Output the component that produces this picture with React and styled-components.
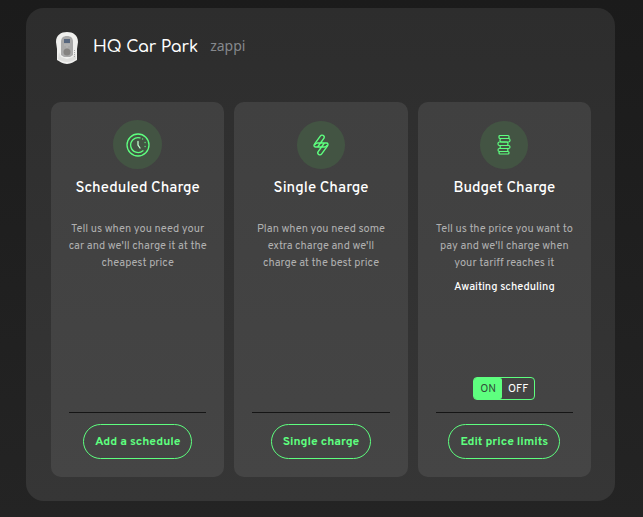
import React, { useState } from 'react';
import styled, { createGlobalStyle } from 'styled-components';

const GlobalStyle = createGlobalStyle`
  * {
    box-sizing: border-box;
  }

  html {
    min-height: 100%;
    background: linear-gradient(#1b1b1b, #242424);
  }

  body {
    margin: 0;
    font-family: Overpass, Roboto, 'Open Sans', sans-serif;
    color: #fff;
  }
`;

const ChargerImage = () => (
  <svg width="22" height="32" viewBox="0 0 22 32" aria-hidden="true">
    <path d="M0 10C0 3 5 0 11 0s11 3 11 10l-1 7 0 11c-2 1-6 4-10 4S3 29 1 28l0-11z" fill="#f0f0ee" />
    <path d="M3 20l-1 7c2 1 5 3 9 3s7-2 9-3l-1-7-2 5-6 2-6-2z" fill="#dededc" />
    <path d="M5 10c0-4 2-6 6-6s6 2 6 6v13l-3 2H8l-3-2z" fill="#a9a9a9" />
    <rect x="8" y="7" width="6" height="4" fill="#58677e" />
    <path d="M8 13h6M10 15h2" stroke="#b8b8b8" />
    <circle cx="11" cy="20" r="3.5" fill="#858381" />
    <path d="M18.5 18v7" stroke="#aaa" strokeDasharray="1 1" />
  </svg>
);

const ClockIcon = () => (
  <svg width="24" height="24" viewBox="0 0 24 24" fill="none" stroke="#5eff7f" strokeWidth="1.3" strokeLinecap="round">
    <circle cx="12" cy="12" r="11" />
    <path d="M14 4.8a7.5 7.5 0 1 0 3 13" />
    <path d="M12 8.5V12l2 3" stroke="#c3ffd0" />
    <path d="M16.5 6h.2M19 9.5h.2M19 13.5h.2" strokeOpacity="0.8" />
  </svg>
);

const BoltIcon = () => (
  <svg width="24" height="24" viewBox="0 0 24 24" fill="none" stroke="#5eff7f" strokeWidth="1.4" strokeLinejoin="round" strokeLinecap="round">
    <path d="M11.3 3.1c1.5-2 4.8-.4 3.7 2L11.5 10h6c1.5 0 2 1.5 1 2.8l-5.800 8.100c-1.5 2-4.8.4-3.7-2l3.500-4.900h-6c-1.500 0-2-1.500-1-2.800z" />
    <path d="M11.500 10L9 13.500M12.500 14l2.500-3.500M6 11.500c.8-1 1.500-1.500 2.500-1.500h3M18 12.500c-.8 1-1.500 1.500-2.500 1.500h-3" />
  </svg>
);

const CoinsIcon = () => (
  <svg width="24" height="24" viewBox="0 0 24 24" fill="none" stroke="#5eff7f" strokeWidth="1.2">
    <rect x="7" y="2.5" width="10" height="3" rx="1" />
    <rect x="8" y="5.5" width="10" height="3.5" rx="1.5" />
    <rect x="6" y="9" width="10" height="3.5" rx="1.5" />
    <rect x="8" y="12.5" width="10" height="3" rx="1.5" />
    <rect x="6" y="15.5" width="10" height="3" rx="1.5" />
    <rect x="7" y="18.5" width="10" height="2.5" rx="1" />
  </svg>
);

const chargeModes = [
  {
    title: 'Scheduled Charge',
    icon: ClockIcon,
    iconSize: 49,
    text: "Tell us when you need your car and we'll charge it at the cheapest price",
    action: 'Add a schedule',
  },
  {
    title: 'Single Charge',
    icon: BoltIcon,
    iconSize: 48,
    text: "Plan when you need some extra charge and we'll charge at the best price",
    action: 'Single charge',
  },
  {
    title: 'Budget Charge',
    icon: CoinsIcon,
    iconSize: 48,
    text: "Tell us the price you want to pay and we'll charge when your tariff reaches it",
    status: 'Awaiting scheduling',
    hasToggle: true,
    action: 'Edit price limits',
  },
];

const App = () => {
  const [enabled, setEnabled] = useState(true);

  return (
    <>
      <GlobalStyle />
      <Page>
        <Panel>
          <Header>
            <ChargerImage />
            <Name>HQ Car Park</Name>
            <Model>zappi</Model>
          </Header>
          <Cards>
            {chargeModes.map(({ title, icon: Icon, iconSize, text, status, hasToggle, action }) => (
              <Card key={title}>
                <IconRow>
                  <IconCircle $size={iconSize}>
                    <Icon />
                  </IconCircle>
                </IconRow>
                <Title>{title}</Title>
                <Description>{text}</Description>
                {status && <Status>{status}</Status>}
                <Footer>
                  {hasToggle && (
                    <Toggle role="group" aria-label={title}>
                      <ToggleOption $active={enabled} aria-pressed={enabled} onClick={() => setEnabled(true)}>
                        ON
                      </ToggleOption>
                      <ToggleOption $active={!enabled} aria-pressed={!enabled} onClick={() => setEnabled(false)}>
                        OFF
                      </ToggleOption>
                    </Toggle>
                  )}
                  <Divider />
                  <ActionButton>{action}</ActionButton>
                </Footer>
              </Card>
            ))}
          </Cards>
        </Panel>
      </Page>
    </>
  );
};

// Styled Components
const Page = styled.div`
  padding: 8px 28px 16px 26px;
`;

const Panel = styled.main`
  padding: 24px;
  padding-left: 25px;
  border-radius: 18px;
  background: linear-gradient(#2d2d2d, #363636);
`;

const Header = styled.header`
  display: flex;
  align-items: center;
  height: 32px;
  margin-bottom: 38px;
  padding-left: 5px;
`;

const Name = styled.h1`
  margin: 0 12px 0 15px;
  padding-bottom: 2px;
  font-family: Comfortaa, Lato, sans-serif;
  font-size: 16px;
  font-weight: 600;
  line-height: 24px;
`;

const Model = styled.span`
  padding-bottom: 4px;
  font-family: 'Noto Sans', sans-serif;
  font-size: 14px;
  line-height: 24px;
  color: #85888c;
`;

const Cards = styled.div`
  display: grid;
  grid-template-columns: repeat(3, 1fr);
  gap: 10px;
`;

const Card = styled.section`
  display: flex;
  flex-direction: column;
  align-items: center;
  min-height: 375px;
  padding: 18px 16px;
  border-radius: 10px;
  background: linear-gradient(#404040, #454545);
  text-align: center;
`;

const IconRow = styled.div`
  display: flex;
  align-items: flex-end;
  height: 49px;
`;

const IconCircle = styled.div`
  display: grid;
  place-items: center;
  width: ${({ $size }) => $size}px;
  height: ${({ $size }) => $size}px;
  border-radius: 50%;
  background: #435443;
`;

const Title = styled.h2`
  margin: 8px 0 0;
  font-size: 15px;
  font-weight: 500;
  line-height: 24px;
  white-space: nowrap;
`;

const Description = styled.p`
  margin: 20px 0 0;
  font-size: 11px;
  line-height: 17px;
  color: #b0b0b0;
`;

const Status = styled.p`
  margin: 7px 0 0;
  font-size: 11px;
  font-weight: 500;
  line-height: 17px;
`;

const Footer = styled.div`
  display: flex;
  flex-direction: column;
  align-items: center;
  width: 100%;
  margin-top: auto;
  padding: 0 2px;
`;

const Toggle = styled.div`
  display: flex;
  height: 23px;
  margin-bottom: 12px;
  border: 1px solid #5eff7f;
  border-radius: 4px;
`;

const ToggleOption = styled.button`
  padding: 0 6px;
  border: 0;
  border-radius: 2px;
  background: ${({ $active }) => ($active ? '#5eff7f' : 'transparent')};
  color: ${({ $active }) => ($active ? '#31513a' : '#fff')};
  font-family: inherit;
  font-size: 11px;
  line-height: 20px;
  cursor: pointer;
`;

const Divider = styled.hr`
  width: 100%;
  margin: 0 0 11px;
  border: 0;
  border-top: 1px solid #151515;
`;

const ActionButton = styled.button`
  height: 35px;
  padding: 0 11px;
  border: 1px solid #5eff7f;
  border-radius: 18px;
  background: transparent;
  color: #5eff7f;
  font-family: inherit;
  font-size: 12px;
  font-weight: 700;
  white-space: nowrap;
  cursor: pointer;
`;

export default App;
